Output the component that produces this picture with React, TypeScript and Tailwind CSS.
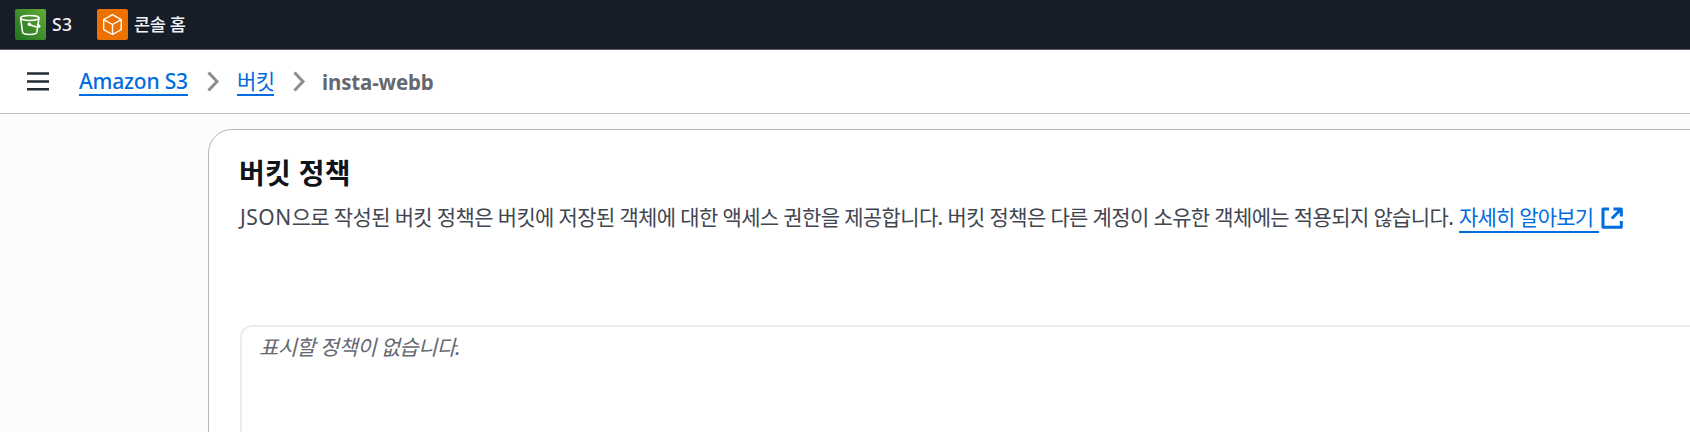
import React from "react";

function BucketIcon() {
  return (
    <svg width="31" height="31" viewBox="0 0 31 31" fill="none" stroke="#fff" strokeWidth="1.5" strokeLinecap="round" strokeLinejoin="round">
      <defs>
        <linearGradient id="bucket-bg" x1="0" y1="1" x2="1" y2="0">
          <stop offset="0" stopColor="#1e7320" />
          <stop offset="1" stopColor="#63ab36" />
        </linearGradient>
      </defs>
      <rect width="31" height="31" rx="2" fill="url(#bucket-bg)" stroke="none" />
      <ellipse cx="14.8" cy="9" rx="9.2" ry="2.4" />
      <path d="M5.6 9.2 7.6 23.4c.3 1.3 3.6 2 7.2 2s6.7-.7 7-2L24 9.2" />
      <path d="M14.5 15.5c3.5 1.9 10.1 3.5 10.4 2 .1-.8-1-1.5-2.5-2.2" />
      <circle cx="14.3" cy="15.3" r="1" fill="#fff" />
    </svg>
  );
}

function ConsoleHomeIcon() {
  return (
    <svg width="31" height="31" viewBox="0 0 31 31" fill="none" stroke="#fff" strokeWidth="1.4" strokeLinejoin="round">
      <rect width="31" height="31" rx="2" fill="#ed7100" stroke="none" />
      <path d="M15.5 5.7 24.2 10.6v10L15.5 25.500 6.7 20.600v-10z" />
      <path d="M6.7 10.6 15.5 15.5l8.7-4.9M15.500 15.500v10" />
    </svg>
  );
}

function Chevron() {
  return (
    <svg width="13" height="21" viewBox="0 0 13 21" fill="none" stroke="#8c8c94" strokeWidth="3">
      <path d="M1.500 1.500 10 10.500l-8.500 9" />
    </svg>
  );
}

function ExternalIcon() {
  return (
    <svg className="mt-[6px] ml-[2px]" width="22" height="22" viewBox="0 0 22 22" fill="none" stroke="#006ce0" strokeWidth="3" strokeLinejoin="round">
      <path d="M8 2H2v18.300h18.300V14" />
      <path d="M12.500 2h7.800V9.500M20 2.300 10.800 11.500" />
    </svg>
  );
}

export default function App() {
  return (
    <div className="flex h-[432px] w-full flex-col overflow-hidden bg-[#fcfcfd] font-['Noto_Sans','Noto_Sans_CJK_KR',sans-serif]">
      <header className="flex h-[50px] shrink-0 items-center border-b border-[#5a5c68] bg-[#161d26] pb-px pl-[15px] text-[17.5px] font-medium text-[#f3f3f7]">
        <BucketIcon />
        <span className="ml-[6px] w-[45px] tracking-[0.4px] whitespace-nowrap">S3</span>
        <ConsoleHomeIcon />
        <span className="ml-[6px] tracking-[-0.3px] whitespace-nowrap">콘솔 홈</span>
      </header>

      <nav className="flex h-[64px] shrink-0 items-center border-b border-[#c0c0c8] bg-white pl-[27px] text-[21px] whitespace-nowrap">
        <svg width="22" height="19" viewBox="0 0 22 19" fill="none" stroke="#232b37" strokeWidth="2.6">
          <path d="M0 1.500h22M0 9.500h22M0 17.300h22" />
        </svg>
        <a className="-mt-[2px] ml-[30px] h-[30px] w-[109px] border-b-2 border-[#006ce0] leading-[30px] font-medium tracking-[-0.2px] text-[#006ce0]">Amazon S3</a>
        <span className="ml-[19px]"><Chevron /></span>
        <a className="-mt-[2px] ml-[17px] h-[30px] w-[37px] border-b-2 border-[#006ce0] leading-[30px] tracking-[-0.6px] text-[#006ce0]">버킷</a>
        <span className="ml-[19px]"><Chevron /></span>
        <span className="ml-[16px] text-[20.5px] leading-[28px] font-bold tracking-[-0.15px] text-[#656871]">insta-webb</span>
      </nav>

      <main className="flex flex-1 pt-[15px] pl-[208px]">
        <section className="-mr-10 h-[400px] flex-1 rounded-tl-[24px] border border-[#b4b4bd] bg-white pt-[24px] pl-[30px] whitespace-nowrap">
          <h2 className="text-[28px] leading-[38px] font-bold tracking-[0.3px] text-[#0f141a]">버킷 정책</h2>
          <div className="mt-[9px] flex h-[34px] text-[21px] leading-[33px] tracking-[-0.64px] text-[#424650]">
            <p className="w-[1219px] pl-[1px]"><span className="tracking-[0.5px]">JSON</span>으로 작성된 버킷 정책은 버킷에 저장된 객체에 대한 액세스 권한을 제공합니다. 버킷 정책은 다른 계정이 소유한 객체에는 적용되지 않습니다.</p>
            <a className="ml-[1px] h-[32px] w-[140px] border-b-2 border-[#006ce0] leading-[33px] tracking-[-0.8px] text-[#006ce0]">자세히 알아보기</a>
            <ExternalIcon />
          </div>
          <div className="mt-[90px] ml-[1px] h-[200px] rounded-tl-[12px] border-2 border-[#ebebf0] pt-[5px] pl-[17px] text-[21px] leading-[30px] tracking-[-0.65px] text-[#656871] italic">표시할 정책이 없습니다.</div>
        </section>
      </main>
    </div>
  );
}
